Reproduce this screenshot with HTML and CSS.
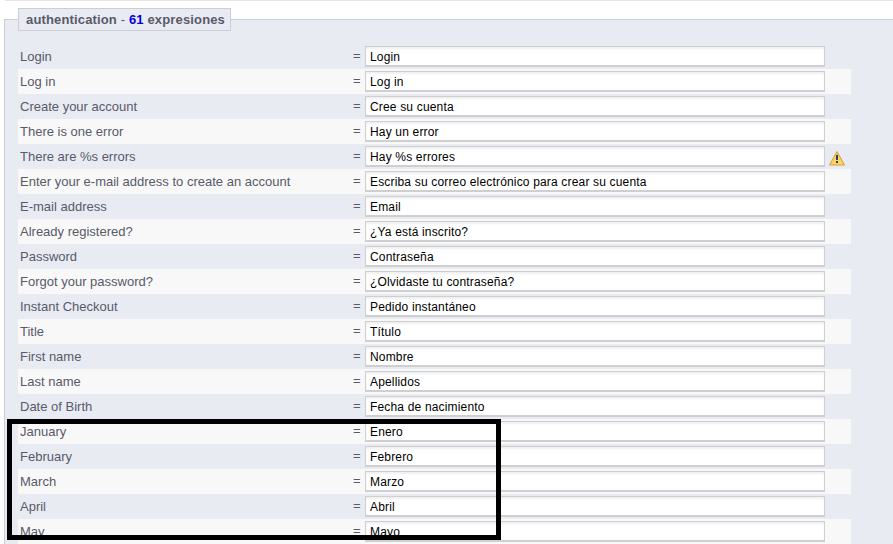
FILE: index.html
```html
<!DOCTYPE html>
<html lang="es">
<head>
<meta charset="utf-8">
<title>authentication</title>
<link rel="stylesheet" href="styles.css">
</head>
<body>
<div class="topline"></div>
<fieldset class="group">
<legend class="title">authentication <span class="dash">-</span> <span class="count">61</span> expresiones</legend>
<div class="rows">
<div class="row"><label class="key">Login</label><span class="eq">=</span><input class="val" value="Login"></div>
<div class="row"><label class="key">Log in</label><span class="eq">=</span><input class="val" value="Log in"></div>
<div class="row"><label class="key">Create your account</label><span class="eq">=</span><input class="val" value="Cree su cuenta"></div>
<div class="row"><label class="key">There is one error</label><span class="eq">=</span><input class="val" value="Hay un error"></div>
<div class="row"><label class="key">There are %s errors</label><span class="eq">=</span><input class="val" value="Hay %s errores">
<svg class="warn" width="18" height="16" viewBox="0 0 18 16"><path d="M9 1.5 L16.5 15 H1.5 Z" fill="#fbd562" stroke="#d69a3c" stroke-width="1" stroke-linejoin="round"/><rect x="8" y="5" width="2" height="5" fill="#2b3f6b"/><rect x="8" y="11" width="2" height="2" fill="#2b3f6b"/></svg></div>
<div class="row"><label class="key">Enter your e-mail address to create an account</label><span class="eq">=</span><input class="val" value="Escriba su correo electrónico para crear su cuenta"></div>
<div class="row"><label class="key">E-mail address</label><span class="eq">=</span><input class="val" value="Email"></div>
<div class="row"><label class="key">Already registered?</label><span class="eq">=</span><input class="val" value="¿Ya está inscrito?"></div>
<div class="row"><label class="key">Password</label><span class="eq">=</span><input class="val" value="Contraseña"></div>
<div class="row"><label class="key">Forgot your password?</label><span class="eq">=</span><input class="val" value="¿Olvidaste tu contraseña?"></div>
<div class="row"><label class="key">Instant Checkout</label><span class="eq">=</span><input class="val" value="Pedido instantáneo"></div>
<div class="row"><label class="key">Title</label><span class="eq">=</span><input class="val" value="Título"></div>
<div class="row"><label class="key">First name</label><span class="eq">=</span><input class="val" value="Nombre"></div>
<div class="row"><label class="key">Last name</label><span class="eq">=</span><input class="val" value="Apellidos"></div>
<div class="row"><label class="key">Date of Birth</label><span class="eq">=</span><input class="val" value="Fecha de nacimiento"></div>
<div class="row"><label class="key">January</label><span class="eq">=</span><input class="val" value="Enero"></div>
<div class="row"><label class="key">February</label><span class="eq">=</span><input class="val" value="Febrero"></div>
<div class="row"><label class="key">March</label><span class="eq">=</span><input class="val" value="Marzo"></div>
<div class="row"><label class="key">April</label><span class="eq">=</span><input class="val" value="Abril"></div>
<div class="row"><label class="key">May</label><span class="eq">=</span><input class="val" value="Mayo"></div>
</div>
</fieldset>
<div class="highlight"></div>
</body>
</html>
```

FILE: styles.css
```css
html, body {
  margin: 0;
  padding: 0;
  height: 544px;
  overflow: hidden;
  background: #fff;
  font-family: "Liberation Sans", Arial, sans-serif;
  font-size: 12px;
  color: #585a69;
}
.topline {
  height: 1px;
  margin-left: 5px;
  background: #e5e5e5;
}
.group {
  margin: 7px -20px 0 4px;
  padding: 0 0 0 13px;
  border: 1px solid #ccced7;
  border-right: 0;
  background: #e9ebf3;
  min-width: 0;
}
.title {
  box-sizing: border-box;
  height: 23px;
  width: 213px;
  padding: 0 0 0 7px;
  border: 1px solid #ccced7;
  background: #e9ebf3;
  font-size: 13px;
  font-weight: bold;
  line-height: 21px;
  white-space: nowrap;
  letter-spacing: 0.15px;
}
.dash { font-weight: normal; }
.count { color: #0000e0; }
.rows {
  width: 833px;
  margin-top: 13px;
}
.row {
  display: flex;
  align-items: center;
  height: 25px;
}
.row:nth-child(even) { background: #f8f8f8; }
.key {
  width: 335px;
  padding-left: 2px;
  box-sizing: border-box;
  font-size: 13px;
}
.eq {
  width: 12px;
  margin-bottom: 3px;
  font-size: 13px;
}
.val {
  box-sizing: border-box;
  width: 460px;
  height: 21px;
  margin: 0;
  padding: 2px 4px 0;
  border: 2px solid #cfcfcf;
  border-width: 1px 1px 2px 1px;
  box-shadow: inset 0 2px 2px #f0f0f0;
  background: #fff;
  color: #000;
  font-family: "Liberation Sans", Arial, sans-serif;
  font-size: 12px;
  letter-spacing: 0.17px;
}
.warn { margin: 2px 0 0 3px; }
.highlight {
  position: absolute;
  left: 7px;
  top: 419px;
  width: 484px;
  height: 111px;
  border: 5px solid #000;
}
```
